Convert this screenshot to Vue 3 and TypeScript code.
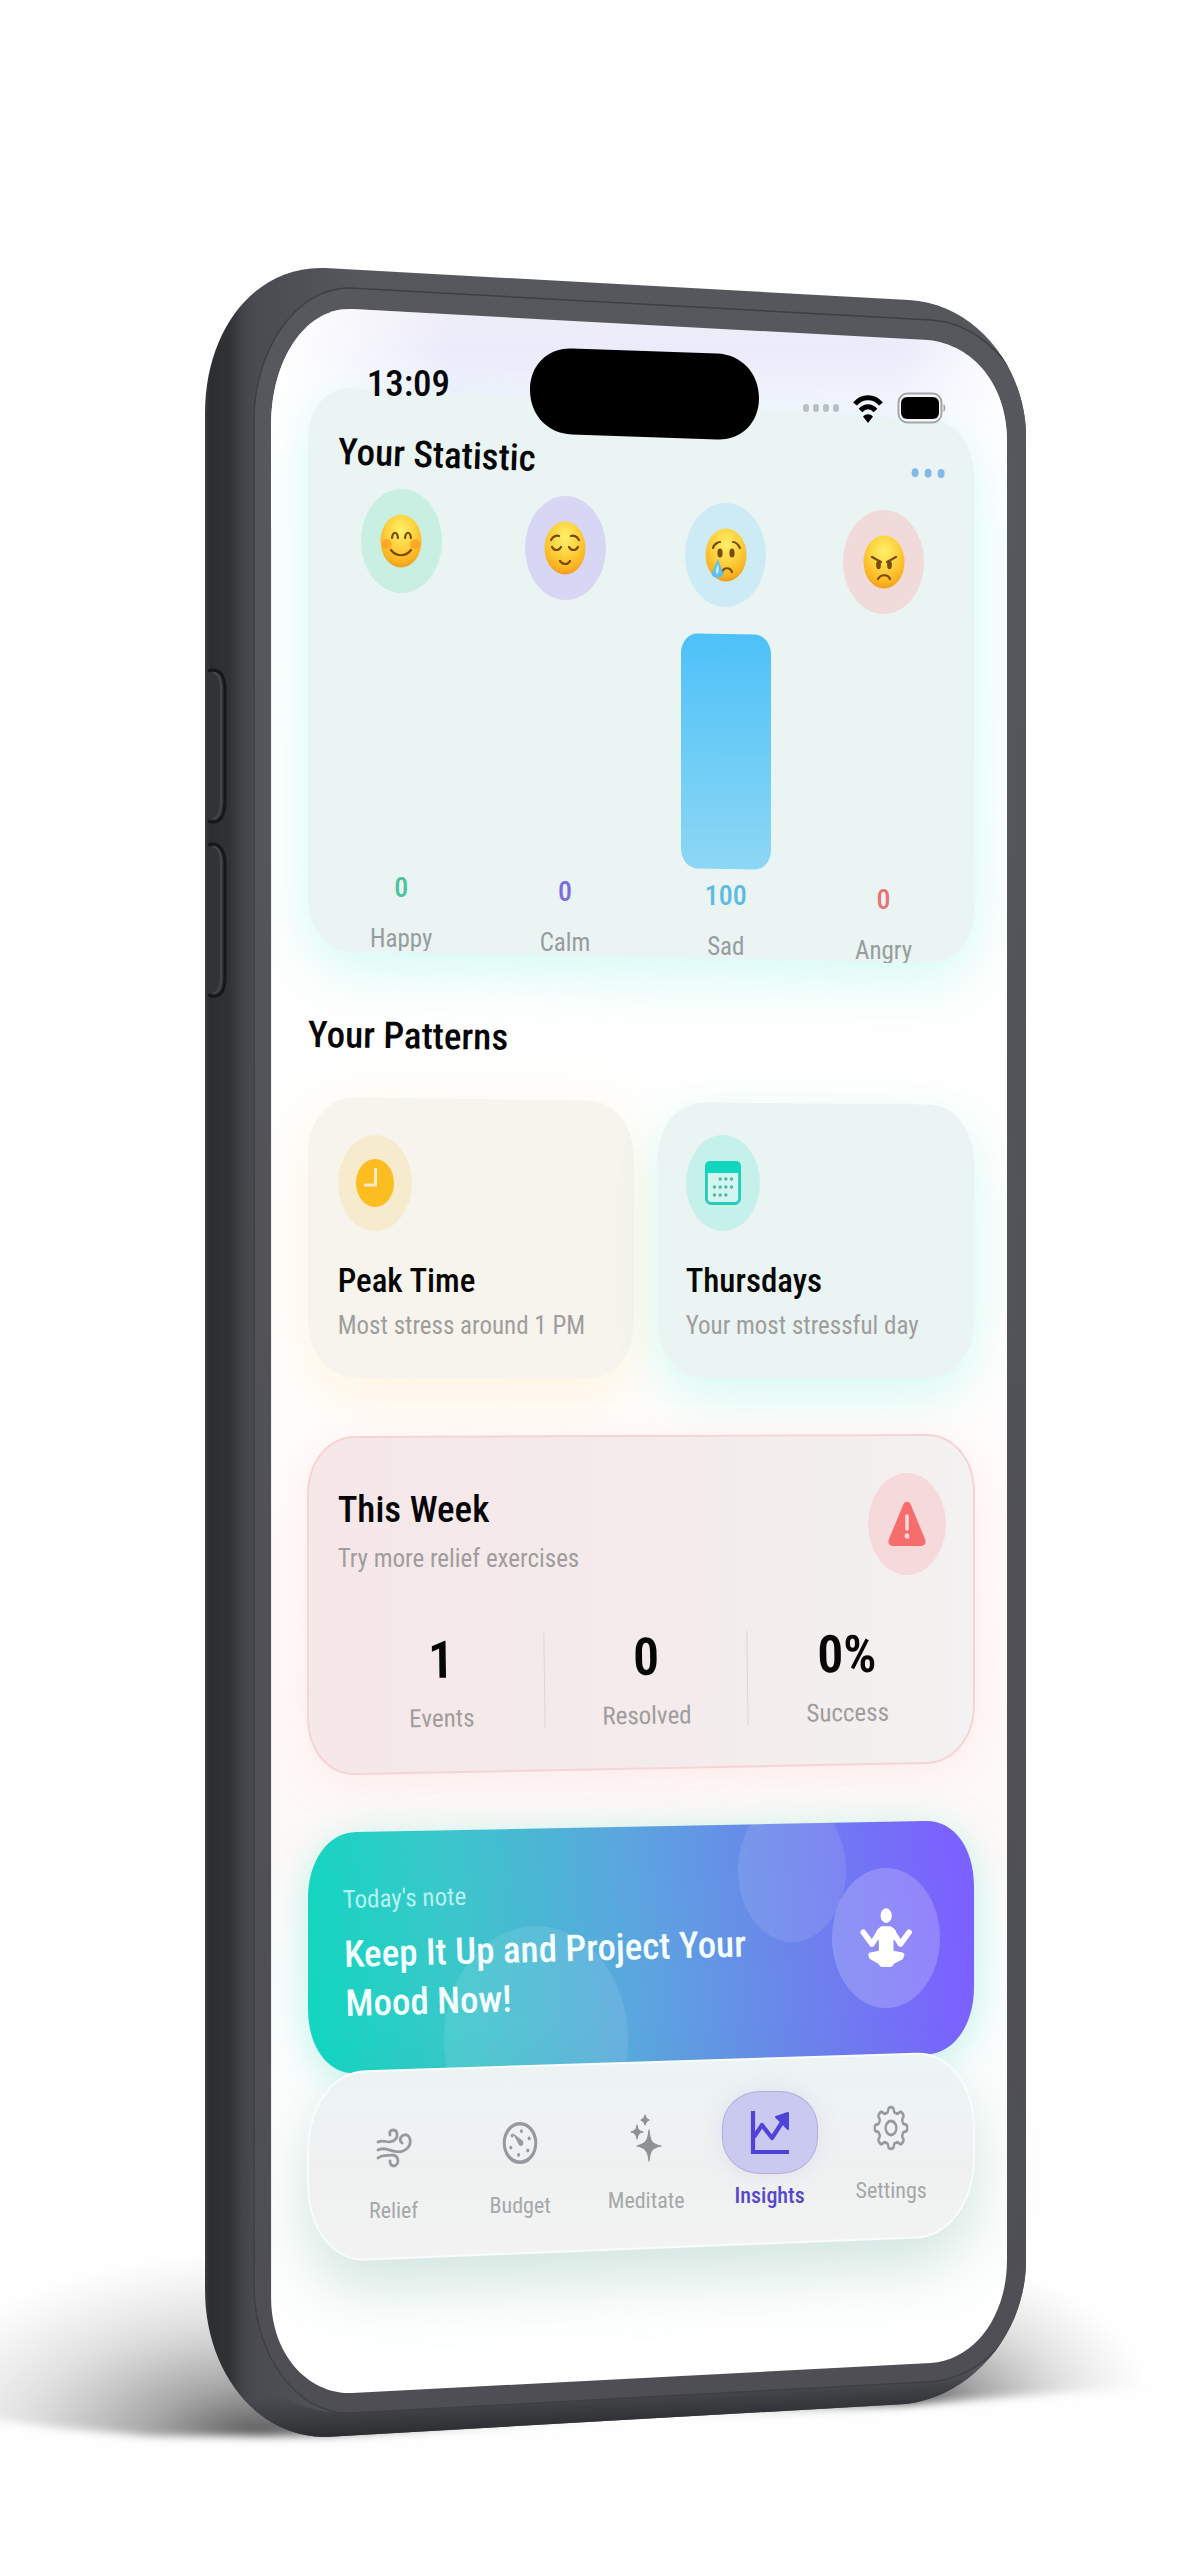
<script setup lang="ts">
interface Mood {
  name: string
  value: number
  tint: string
  ink: string
  bar: string
}

interface Tab {
  name: string
  active?: boolean
}

const moods: Mood[] = [
  { name: 'Happy', value: 0, tint: '#c8efe1', ink: '#4cc39c', bar: '#4cc39c' },
  { name: 'Calm', value: 0, tint: '#d8d6f5', ink: '#7c6ce0', bar: '#7c6ce0' },
  { name: 'Sad', value: 100, tint: '#cdebf4', ink: '#5dbbe0', bar: 'linear-gradient(#4dc1f8, #8dd7f4)' },
  { name: 'Angry', value: 0, tint: '#f0dada', ink: '#e87377', bar: '#e87377' },
]

const metrics = [
  { value: '1', label: 'Events' },
  { value: '0', label: 'Resolved' },
  { value: '0%', label: 'Success' },
]

const tabs: Tab[] = [
  { name: 'Relief' },
  { name: 'Budget' },
  { name: 'Meditate' },
  { name: 'Insights', active: true },
  { name: 'Settings' },
]

/** Rounded four-sided plate whose top and bottom edges follow the angle of the phone. */
function plate(w: number, tl: number, tr: number, br: number, bl: number, rx: number, ry: number): string {
  const top = (x: number) => (tl + ((tr - tl) * x) / w).toFixed(1)
  const bot = (x: number) => (bl + ((br - bl) * x) / w).toFixed(1)
  const k = 0.42
  return [
    `M${rx},${top(rx)}`,
    `L${w - rx},${top(w - rx)}`,
    `C${w - rx * k},${top(w - rx * k)} ${w},${tr + ry * k} ${w},${tr + ry}`,
    `L${w},${br - ry}`,
    `C${w},${br - ry * k} ${w - rx * k},${bot(w - rx * k)} ${w - rx},${bot(w - rx)}`,
    `L${rx},${bot(rx)}`,
    `C${rx * k},${bot(rx * k)} 0,${bl - ry * k} 0,${bl - ry}`,
    `L0,${tl + ry}`,
    `C0,${tl + ry * k} ${rx * k},${top(rx * k)} ${rx},${top(rx)}Z`,
  ].join(' ')
}

const statPlate = plate(664, 0, 36, 577, 565, 44, 54)
const peakPlate = plate(325, 0, 4, 282, 280, 46, 58)
const dayPlate = plate(315, 5, 8, 281, 281, 46, 58)
const weekPlate = plate(666, 2, 0, 327, 340, 48, 58)
const notePlate = plate(666, 13, 0, 233, 255, 48, 66)
const navPlate = plate(666, 21, 0, 183, 210, 58, 80)
const islandPlate = plate(229, 0, 8, 94, 86, 42, 43)

/** Outline of a cog with eight soft teeth. */
function cog(cx: number, cy: number, inner: number, outer: number): string {
  const teeth = 8
  const pts: string[] = []
  for (let i = 0; i < teeth * 16; i++) {
    const a = (i / (teeth * 16)) * Math.PI * 2 - Math.PI / 2
    const wave = Math.tanh(2.4 * Math.cos(a * teeth)) / Math.tanh(2.4)
    const r = inner + ((outer - inner) * (wave + 1)) / 2
    pts.push(`${(cx + r * Math.cos(a)).toFixed(1)},${(cy + r * Math.sin(a)).toFixed(1)}`)
  }
  return `M${pts.join('L')}Z`
}

const cogPath = cog(20, 20, 14, 18)

const dial = [0, 60, 120, 180, 240, 300].map((deg) => {
  const a = ((deg - 90 + 8) * Math.PI) / 180
  return { x: 20 + 11 * Math.cos(a), y: 20 + 11 * Math.sin(a) }
})

const days = [
  [16, 18], [22, 18], [28, 18],
  [10, 26], [16, 26], [22, 26], [28, 26],
  [10, 34], [16, 34], [22, 34],
]
</script>

<template>
  <div class="stage">
    <svg class="ground" viewBox="0 0 1183 300" preserveAspectRatio="none" aria-hidden="true">
      <defs>
        <radialGradient id="shade">
          <stop offset="0" stop-color="#3c3c3e" stop-opacity=".9" />
          <stop offset=".3" stop-color="#5c5c5e" stop-opacity=".55" />
          <stop offset=".65" stop-color="#8a8a8c" stop-opacity=".25" />
          <stop offset="1" stop-color="#aaa" stop-opacity="0" />
        </radialGradient>
        <filter id="soft" x="-10%" y="-10%" width="120%" height="120%"><feGaussianBlur stdDeviation="4" /></filter>
        <mask id="floor">
          <path d="M-60,-20H1243V196L1150,206L900,225L330,256L150,256L60,248L-60,232Z" fill="#fff" filter="url(#soft)" />
        </mask>
      </defs>
      <g mask="url(#floor)">
        <ellipse cx="260" cy="262" rx="370" ry="190" fill="url(#shade)" />
        <ellipse cx="910" cy="228" rx="240" ry="150" fill="url(#shade)" />
      </g>
    </svg>

    <main class="phone">
      <svg class="frame" viewBox="0 0 820 2170" preserveAspectRatio="none" aria-hidden="true">
        <defs>
          <linearGradient id="body" x1="0" x2="1" y1="0" y2="0">
            <stop offset="0" stop-color="#3a3d3f" />
            <stop offset=".006" stop-color="#2b2e30" />
            <stop offset=".03" stop-color="#303234" />
            <stop offset=".045" stop-color="#434448" />
            <stop offset=".06" stop-color="#4a4b50" />
            <stop offset=".2" stop-color="#57585d" />
            <stop offset="1" stop-color="#55565b" />
          </linearGradient>
          <linearGradient id="rim" x1="0" x2="0" y1="0" y2="1">
            <stop offset="0" stop-color="#57585d" />
            <stop offset=".5" stop-color="#515257" />
            <stop offset="1" stop-color="#4e4e54" />
          </linearGradient>
          <linearGradient id="under" gradientUnits="userSpaceOnUse" x1="400" y1="2116" x2="402" y2="2164">
            <stop offset="0" stop-color="#3b3c40" stop-opacity="0" />
            <stop offset=".45" stop-color="#3b3c40" stop-opacity=".9" />
            <stop offset="1" stop-color="#26282a" />
          </linearGradient>
          <linearGradient id="wall" x1="0" x2="0" y1="0" y2="1">
            <stop offset="0" stop-color="#efedf6" />
            <stop offset=".02" stop-color="#ebebfb" />
            <stop offset=".05" stop-color="#f6f6fe" />
            <stop offset=".1" stop-color="#fdffff" />
            <stop offset=".5" stop-color="#fffefd" />
            <stop offset=".62" stop-color="#fffafa" />
            <stop offset=".74" stop-color="#fdf9f8" />
            <stop offset=".8" stop-color="#fbfdfd" />
            <stop offset="1" stop-color="#fff" />
          </linearGradient>
          <linearGradient id="sheen" x1="0" x2="1" y1="0" y2="0">
            <stop offset="0" stop-color="#fff" />
            <stop offset=".05" stop-color="#fff" stop-opacity=".85" />
            <stop offset=".25" stop-color="#fff" stop-opacity="0" />
            <stop offset=".85" stop-color="#fff" stop-opacity="0" />
            <stop offset="1" stop-color="#fff" stop-opacity=".9" />
          </linearGradient>
          <clipPath id="shell">
            <path d="M0,146C0,63 50,-2 120,1L703,33C772,37 820,103 820,170V1993C820,2063 770,2128 700,2137L120,2170C50,2170 0,2103 0,2023Z" />
          </clipPath>
        </defs>
        <g clip-path="url(#shell)">
          <rect width="820" height="2170" fill="url(#body)" />
          <path fill="url(#under)" d="M0,2060C60,2130 100,2147 145,2146L720,2115C755,2113 785,2095 830,2040V2170H0Z" />
          <path
            fill="url(#rim)"
            stroke="#3e3f43"
            stroke-width="1.5"
            d="M49,152C49,85 90,20 145,21L725,53C775,56 812,100 830,150V2010C812,2065 780,2112 720,2115L145,2146C90,2148 49,2085 49,2020Z"
          />
        </g>
        <g fill="#313436" stroke="#15181a" stroke-width="3">
          <path d="M3,404C14,400 20,408 20,422V534C20,550 14,558 3,554" />
          <path d="M3,578C14,574 20,584 20,596V710C20,726 14,732 3,728" />
        </g>
        <g fill="none" stroke="#45484b" stroke-width="2">
          <path d="M8,406C14,406 16,414 16,424V532C16,544 14,550 8,552" />
          <path d="M8,580C14,580 16,588 16,598V708C16,720 14,726 8,726" />
        </g>
        <path
          fill="url(#wall)"
          d="M66,158C66,93 100,40 147,42L722,73C768,78 801,118 801,175V1993C801,2050 768,2093 725,2096L147,2126C105,2128 66,2090 66,2030Z"
        />
        <path
          fill="url(#sheen)"
          d="M66,158C66,93 100,40 147,42L722,73C768,78 801,118 801,175V260H66Z"
        />
      </svg>

      <header class="status">
        <time class="clock">13:09</time>
        <svg class="island" viewBox="0 0 229 94" aria-hidden="true"><path :d="islandPlate" /></svg>
        <div class="signals">
          <svg width="36" height="10" viewBox="0 0 36 10" aria-label="Cellular">
            <g fill="#b9bfc3">
              <rect x="0" y="1" width="6" height="8" rx="3" /><rect x="10" y="1" width="6" height="8" rx="3" />
              <rect x="20" y="1" width="6" height="8" rx="3" /><rect x="30" y="1" width="6" height="8" rx="3" />
            </g>
          </svg>
          <svg width="30" height="30" viewBox="0 0 30 30" aria-label="Wi-Fi">
            <g fill="none" stroke="#000" stroke-width="5">
              <path d="M2,11C9,2.500 21,2.500 28,11" />
              <path d="M7.500,17.500C12,12.500 18,12.500 22.500,17.500" />
            </g>
            <path d="M15,30L10,23.500C13,20.500 17,20.500 20,23.500Z" />
          </svg>
          <svg width="50" height="32" viewBox="0 0 50 32" aria-label="Battery full">
            <rect x="1.500" y="1.500" width="43" height="29" rx="9" fill="#f6f8f8" stroke="#a3a6a8" stroke-width="2" />
            <rect x="4" y="5" width="38" height="22" rx="6" />
            <path d="M46.500,12C49,13 49,19 46.500,20Z" fill="#a3a6a8" />
          </svg>
        </div>
      </header>

      <section class="card stats" aria-labelledby="stat-title">
        <svg class="plate mint" viewBox="0 0 664 577" preserveAspectRatio="none" aria-hidden="true">
          <path :d="statPlate" fill="#eaf4f2" />
        </svg>
        <div class="stats-head">
          <h2 id="stat-title" class="title">Your Statistic</h2>
          <button type="button" class="more" aria-label="More">
            <i></i><i></i><i></i>
          </button>
        </div>
        <ul class="chart">
          <li
            v-for="(m, i) in moods"
            :key="m.name"
            class="mood"
            :style="{ paddingTop: i * 7 + 'px', paddingBottom: (3 - i) * 4 + 'px' }"
          >
            <span class="face" :style="{ background: m.tint }">
              <svg width="42" height="54" viewBox="0 0 42 54" aria-hidden="true">
                <defs>
                  <radialGradient :id="'skin' + i" cx=".5" cy=".3" r=".75">
                    <stop offset="0" stop-color="#fff06a" />
                    <stop offset=".45" stop-color="#fdd23f" />
                    <stop offset=".8" stop-color="#fcb21f" />
                    <stop offset="1" stop-color="#ec8f1d" />
                  </radialGradient>
                </defs>
                <ellipse cx="21" cy="27" rx="20.500" ry="26.500" :fill="`url(#skin${i})`" />
                <g fill="none" stroke="#7a4a0c" stroke-width="2.200" stroke-linecap="round">
                  <template v-if="m.name === 'Happy'">
                    <ellipse cx="7" cy="30" rx="5" ry="5" fill="#ff8a1c" fill-opacity=".5" stroke="none" />
                    <ellipse cx="35" cy="30" rx="5" ry="5" fill="#ff8a1c" fill-opacity=".5" stroke="none" />
                    <path d="M12,24C13,17 17,17 18,24M25,24C26,17 30,17 31,24M11,36C16,43 26,43 31,36" />
                  </template>
                  <template v-else-if="m.name === 'Calm'">
                    <path d="M7,19C9,15 13,14 15,15M27,15C29,14 33,15 35,19M8,26C10,30 15,30 17,26M25,26C27,30 32,30 34,26M16,40C19,44 24,44 26,40" />
                  </template>
                  <template v-else-if="m.name === 'Sad'">
                    <path d="M8,20C9,16 13,14 15,14M28,14C30,14 33,16 35,20M17,44C19,39 25,39 27,44" />
                    <g fill="#7a4a0c" stroke="none">
                      <ellipse cx="15" cy="25" rx="2.600" ry="4.600" /><ellipse cx="27" cy="25" rx="2.600" ry="4.600" />
                    </g>
                    <path d="M13,31C10,38 7,42 7,46C7,51 18,51 18,46C18,42 15,38 13,31Z" fill="#5dc0ee" stroke="none" />
                    <path d="M13,36C11,41 10,44 12,46C14,45 14,41 13,36Z" fill="#c9f0ff" stroke="none" />
                  </template>
                  <template v-else>
                    <path d="M9,22L18,27M33,22L24,27M15,44C18,39 25,39 27,44" />
                    <g fill="#7a4a0c" stroke="none">
                      <ellipse cx="15.500" cy="30" rx="2.400" ry="4.200" /><ellipse cx="26.500" cy="30" rx="2.400" ry="4.200" />
                    </g>
                  </template>
                </g>
              </svg>
            </span>
            <span class="slot">
              <span class="bar" :style="{ height: m.value + '%', background: m.bar }"></span>
            </span>
            <strong class="value" :style="{ color: m.ink }">{{ m.value }}</strong>
            <span class="mood-name">{{ m.name }}</span>
          </li>
        </ul>
      </section>

      <h2 class="title patterns-title">Your Patterns</h2>
      <section class="patterns" aria-label="Your Patterns">
        <article class="card pattern">
          <svg class="plate amber" viewBox="0 0 325 282" preserveAspectRatio="none" aria-hidden="true">
            <path :d="peakPlate" fill="#f6f4ed" />
          </svg>
          <span class="oval sun">
            <svg width="38" height="48" viewBox="0 0 38 48" aria-hidden="true">
              <ellipse cx="19" cy="24" rx="19" ry="24" fill="#fbbd20" />
              <path d="M19.500,9V26H8" fill="none" stroke="#f9ecc4" stroke-width="3" />
            </svg>
          </span>
          <h3 class="subtitle">Peak Time</h3>
          <p class="note">Most stress around 1 PM</p>
        </article>
        <article class="card pattern">
          <svg class="plate mint" viewBox="0 0 315 282" preserveAspectRatio="none" aria-hidden="true">
            <path :d="dayPlate" fill="#eaf4f2" />
          </svg>
          <span class="oval teal">
            <svg width="36" height="44" viewBox="0 0 38 44" preserveAspectRatio="none" aria-hidden="true">
              <rect x="1.500" y="1.500" width="35" height="41" rx="5" fill="#d3f5f0" stroke="#25cdb9" stroke-width="3" />
              <path d="M0,12V6C0,2 2,0 6,0H32C36,0 38,2 38,6V12Z" fill="#0fd6bd" />
              <circle v-for="(d, i) in days" :key="i" :cx="d[0]" :cy="d[1]" r="1.800" fill="#4fb5a9" />
            </svg>
          </span>
          <h3 class="subtitle">Thursdays</h3>
          <p class="note">Your most stressful day</p>
        </article>
      </section>

      <section class="card week" aria-labelledby="week-title">
        <svg class="plate rose" viewBox="0 0 666 340" preserveAspectRatio="none" aria-hidden="true">
          <defs>
            <linearGradient id="blush" x1="0" x2="1" y1="0" y2="0">
              <stop offset="0" stop-color="#f6e7e9" />
              <stop offset=".5" stop-color="#f4ebeb" />
              <stop offset="1" stop-color="#f3f1f1" />
            </linearGradient>
          </defs>
          <path :d="weekPlate" fill="url(#blush)" stroke="#f8d3d4" stroke-width="2" />
        </svg>
        <div class="week-head">
          <div>
            <h2 id="week-title" class="title">This Week</h2>
            <p class="note week-note">Try more relief exercises</p>
          </div>
          <span class="oval alert">
            <svg width="38" height="46" viewBox="0 0 38 46" aria-hidden="true">
              <path d="M15.500,3C17,0 21,0 22.500,3L37,38C38.500,42 37,45 33,45H5C1,45 -.5,42 1,38Z" fill="#f76d6e" />
              <path d="M19,15V28" stroke="#fbd9da" stroke-width="3.500" stroke-linecap="round" />
              <ellipse cx="19" cy="35" rx="2.300" ry="2.800" fill="#fbd9da" />
            </svg>
          </span>
        </div>
        <dl class="metrics">
          <div v-for="m in metrics" :key="m.label" class="metric">
            <dd>{{ m.value }}</dd>
            <dt class="note">{{ m.label }}</dt>
          </div>
        </dl>
      </section>

      <section class="card today">
        <svg class="plate aqua" viewBox="0 0 666 255" preserveAspectRatio="none" aria-hidden="true">
          <defs>
            <linearGradient id="dusk" gradientUnits="userSpaceOnUse" x1="0" y1="150" x2="650" y2="90">
              <stop offset="0" stop-color="#13d6c0" />
              <stop offset=".22" stop-color="#3ac7ca" />
              <stop offset=".5" stop-color="#5ba6df" />
              <stop offset=".75" stop-color="#6c83ec" />
              <stop offset="1" stop-color="#7b61ff" />
            </linearGradient>
            <clipPath id="today-clip"><path :d="notePlate" /></clipPath>
          </defs>
          <path :d="notePlate" fill="url(#dusk)" />
          <g clip-path="url(#today-clip)" fill="#fff" fill-opacity=".1">
            <ellipse cx="484" cy="50" rx="54" ry="72" />
            <ellipse cx="228" cy="220" rx="92" ry="114" />
          </g>
        </svg>
        <div class="today-text">
          <p class="kicker">Today's note</p>
          <h2 class="headline">Keep It Up and Project Your<br />Mood Now!</h2>
        </div>
        <span class="oval zen">
          <svg width="52" height="60" viewBox="0 0 157 180" preserveAspectRatio="none" aria-hidden="true">
            <g fill="#fff" stroke="#fff" stroke-linejoin="round" stroke-linecap="round">
              <ellipse cx="79" cy="23" rx="17" ry="22" stroke="none" />
              <path d="M66,60H92L103,70L96,100V136H62V100L55,70Z" stroke-width="10" />
              <path d="M10,73L36,108L62,68M148,73L122,108L96,68" fill="none" stroke-width="17" />
              <path d="M32,140L62,134H96L127,140L124,148L98,162L92,170H82L79,166L76,170H66L60,162L35,148Z" stroke-width="14" />
            </g>
          </svg>
        </span>
      </section>

      <nav class="card tabs" aria-label="Main">
        <svg class="plate fog" viewBox="0 0 666 210" preserveAspectRatio="none" aria-hidden="true">
          <defs>
            <linearGradient id="mist" x1="0" x2="0" y1="0" y2="1">
              <stop offset="0" stop-color="#edf4f4" />
              <stop offset=".55" stop-color="#eff1f1" />
              <stop offset="1" stop-color="#f3f3f3" />
            </linearGradient>
          </defs>
          <path :d="navPlate" fill="url(#mist)" stroke="#f9fcfc" stroke-width="2" />
        </svg>
        <a
          v-for="(t, i) in tabs"
          :key="t.name"
          href="#"
          class="tab"
          :class="{ on: t.active }"
          :aria-current="t.active ? 'page' : undefined"
          :style="{ marginTop: (tabs.length - 1 - i) * 5 + 'px' }"
        >
          <span class="pill">
            <svg v-if="t.name === 'Relief'" width="36" height="40" viewBox="0 0 36 40" aria-hidden="true">
              <g fill="none" stroke="#979a9c" stroke-width="2.800" stroke-linecap="round">
                <path d="M2,14C8,11 11,16 17,13C23,10 22,2 17,2C14,2 13,5 14,7" />
                <path d="M2,22C10,17 17,27 27,23C38,18 35,5 28,7C24,8 23,13 26,15" />
                <path d="M2,30C7,26 12,28 16,27C23,27 24,37 18,38C15,38 14,36 14,33" />
              </g>
            </svg>
            <svg v-else-if="t.name === 'Budget'" width="36" height="44" viewBox="0 0 40 40" preserveAspectRatio="none" aria-hidden="true">
              <circle cx="20" cy="20" r="17.500" fill="none" stroke="#979a9c" stroke-width="3.400" />
              <circle v-for="(d, n) in dial" :key="n" :cx="d.x" :cy="d.y" r="1.700" fill="#979a9c" />
              <path d="M12,11L23,18C25,21 22,24 19,22Z" fill="#979a9c" />
            </svg>
            <svg v-else-if="t.name === 'Meditate'" width="32" height="48" viewBox="0 0 32 48" aria-hidden="true">
              <g fill="#8f9294" stroke="#8f9294" stroke-linejoin="round" stroke-width="1.200">
                <path d="M19,16C20,28 22,30 31,32C22,34 20,36 19,47C18,36 15,34 7,32C15,30 18,28 19,16Z" />
                <path d="M7,11C7.500,16 9,17 13,18C9,19 7.500,20 7,25C6.500,20 5,19 1,18C5,17 6.500,16 7,11Z" />
                <path d="M15,1C15.500,4 16.500,5 19,6C16.500,7 15.500,8 15,11C14.500,8 13.500,7 11,6C13.500,5 14.500,4 15,1Z" />
              </g>
            </svg>
            <svg v-else-if="t.name === 'Insights'" width="40" height="46" viewBox="0 0 40 46" aria-hidden="true">
              <g fill="none" stroke="#4f43da" stroke-width="4.200">
                <path d="M3,1V42H39" />
                <path d="M4,27L12,15L22,28L33,11" stroke-linejoin="round" />
              </g>
              <path d="M26,7L38,3V19Z" fill="#4f43da" stroke="#4f43da" stroke-linejoin="round" stroke-width="2" />
            </svg>
            <svg v-else width="36" height="46" viewBox="0 0 40 40" preserveAspectRatio="none" aria-hidden="true">
              <g fill="none" stroke="#979a9c" stroke-width="2.600">
                <path :d="cogPath" />
                <circle cx="20" cy="20" r="6" />
              </g>
            </svg>
          </span>
          <span class="tab-name">{{ t.name }}</span>
        </a>
      </nav>
    </main>
  </div>
</template>

<style>
body {
  margin: 0;
  background: #fefefe;
}
</style>

<style scoped>
.stage {
  position: relative;
  padding: 267px 13.3% 123px 17.3%;
  overflow: hidden;
  font-family: "Roboto Condensed", Roboto, sans-serif;
  color: #060606;
}

.ground {
  position: absolute;
  left: 0;
  bottom: 80px;
  width: 100%;
  height: 300px;
}

.phone {
  position: relative;
  display: flex;
  flex-direction: column;
  padding: 80px 52px 175px 103px;
}

.frame {
  position: absolute;
  inset: 0;
  width: 100%;
  height: 100%;
}

h2,
h3,
p,
ul,
dl,
dd {
  margin: 0;
  padding: 0;
}

.title {
  font-size: 37px;
  line-height: 44px;
  font-weight: 500;
}

.subtitle {
  font-size: 33px;
  line-height: 40px;
  font-weight: 500;
}

.note {
  font-size: 25px;
  line-height: 32px;
  color: #9f9d9d;
}

.card {
  position: relative;
}

.card > * {
  position: relative;
}

.card > .plate {
  position: absolute;
  inset: 0;
  width: 100%;
  height: 100%;
  overflow: visible;
}

.mint {
  filter: drop-shadow(0 18px 26px rgba(70, 235, 215, 0.22));
}

.amber {
  filter: drop-shadow(0 18px 26px rgba(255, 200, 90, 0.18));
}

.rose {
  filter: drop-shadow(0 8px 20px rgba(250, 170, 170, 0.18));
}

.aqua {
  filter: drop-shadow(0 6px 20px rgba(30, 214, 190, 0.28));
}

.fog {
  filter: drop-shadow(0 28px 30px rgba(60, 140, 120, 0.22));
}

.oval {
  display: flex;
  align-items: center;
  justify-content: center;
  border-radius: 50%;
  flex: none;
}

/* status bar */
.status {
  position: relative;
  z-index: 1;
  display: grid;
  grid-template-columns: 163px 229px 1fr;
  gap: 0;
  height: 94px;
  padding: 0 27px 0 59px;
}

.clock {
  padding-top: 15px;
  font-size: 37px;
  line-height: 44px;
  font-weight: 500;
}

.island {
  width: 229px;
  height: 94px;
}

.signals {
  display: flex;
  justify-content: flex-end;
  align-items: center;
  gap: 14px;
  height: 122px;
}

/* statistic */
.stats {
  margin-top: -55px;
  padding-top: 43px;
}

.stats-head {
  display: flex;
  justify-content: space-between;
  align-items: center;
  padding: 0 29px 0 30px;
  transform: rotate(2deg);
  transform-origin: left center;
}

.more {
  display: flex;
  gap: 6px;
  padding: 10px 0;
  border: 0;
  background: none;
}

.more i {
  width: 7px;
  height: 9px;
  border-radius: 50%;
  background: #85b8ea;
}

.chart {
  display: grid;
  grid-template-columns: 165fr 162fr 159fr 156fr;
  height: 474px;
  margin-top: 16px;
  padding: 0 12px 0 11px;
  list-style: none;
}

.mood {
  display: flex;
  flex-direction: column;
  align-items: center;
  box-sizing: border-box;
}

.face {
  display: flex;
  align-items: center;
  justify-content: center;
  flex: none;
  width: 81px;
  height: 104px;
  border-radius: 50%;
}

.slot {
  flex: 1;
  display: flex;
  align-items: flex-end;
  width: 90px;
  margin: 27px 0 11px;
}

.bar {
  width: 100%;
  border-radius: 16px / 20px;
  transform: skewY(1deg);
}

.value {
  font-size: 28px;
  line-height: 32px;
  font-weight: 500;
}

.mood-name {
  height: 27px;
  margin-top: 20px;
  overflow: hidden;
  font-size: 25px;
  line-height: 30px;
  color: #979d9d;
}

/* patterns */
.patterns-title {
  position: relative;
  margin-top: 50px;
  transform: rotate(0.8deg);
  transform-origin: left center;
}

.patterns {
  display: grid;
  grid-template-columns: 325fr 315fr;
  gap: 24px;
  margin-top: 40px;
}

.pattern {
  padding: 38px 0 37px 30px;
}

.pattern + .pattern {
  padding-left: 28px;
}

.pattern .oval {
  width: 74px;
  height: 96px;
}

.sun {
  background: #f7ebcd;
}

.teal {
  background: #c6f1ea;
}

.pattern .subtitle {
  margin-top: 30px;
}

.pattern .note {
  margin-top: 9px;
}

/* this week */
.week {
  margin-top: 56px;
  padding: 38px 28px 43px 30px;
}

.week-head {
  display: flex;
  justify-content: space-between;
  align-items: flex-end;
}

.week-note {
  margin-top: 11px;
}

.alert {
  width: 78px;
  height: 102px;
  background: #f6d9db;
}

.metrics {
  display: grid;
  grid-template-columns: 206fr 203fr 197fr;
  margin-top: 57px;
  transform: rotate(-0.8deg);
}

.metric {
  display: flex;
  flex-direction: column;
  align-items: center;
  background: linear-gradient(#dcd5d6, #dcd5d6) no-repeat right top / 1px 95px;
}

.metric:last-child {
  background: none;
}

.metric dd {
  font-size: 52px;
  line-height: 52px;
  font-weight: 600;
}

.metric dt {
  margin-top: 16px;
}

/* today's note */
.today {
  display: flex;
  justify-content: space-between;
  align-items: flex-start;
  height: 207px;
  margin-top: 45px;
  padding: 48px 34px 0 36px;
}

.today-text {
  padding-top: 16px;
  color: #f4feff;
  transform: rotate(-1.5deg);
  transform-origin: left center;
}

.kicker {
  font-size: 25px;
  line-height: 32px;
  color: #b9f1f1;
}

.headline {
  margin-top: 14px;
  font-size: 37px;
  line-height: 49px;
  font-weight: 500;
}

.zen {
  width: 108px;
  height: 140px;
  background: rgba(255, 255, 255, 0.2);
}

/* tab bar */
.tabs {
  display: grid;
  grid-template-columns: 126fr 127fr 125fr 122fr 121fr;
  height: 176px;
  margin-top: -23px;
  padding: 34px 22px 0 23px;
}

.tab {
  display: flex;
  flex-direction: column;
  align-items: center;
  align-self: start;
  color: #a5a7a9;
  text-decoration: none;
}

.pill {
  display: flex;
  align-items: center;
  justify-content: center;
  width: 94px;
  height: 81px;
  border: 1px solid transparent;
  border-radius: 38px / 36px;
}

.tab-name {
  margin-top: 8px;
  font-size: 22px;
  line-height: 28px;
}

.on .pill {
  border-color: #b3aedd;
  background: #cac9f0;
  box-shadow: 0 0 24px rgba(120, 110, 240, 0.12);
}

.on .tab-name {
  color: #5548cf;
  font-weight: 500;
}
</style>
